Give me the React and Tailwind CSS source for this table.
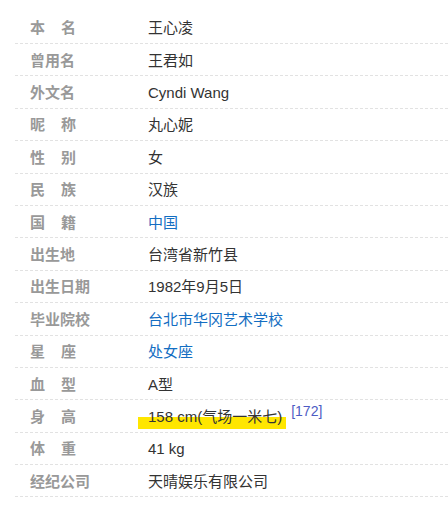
import React from 'react'

const rows = [
  { name: ['本', '名'], value: '王心凌' },
  { name: '曾用名', value: '王君如' },
  { name: '外文名', value: 'Cyndi Wang' },
  { name: ['昵', '称'], value: '丸心妮' },
  { name: ['性', '别'], value: '女' },
  { name: ['民', '族'], value: '汉族' },
  { name: ['国', '籍'], value: '中国', link: true },
  { name: '出生地', value: '台湾省新竹县' },
  { name: '出生日期', value: '1982年9月5日' },
  { name: '毕业院校', value: '台北市华冈艺术学校', link: true },
  { name: ['星', '座'], value: '处女座', link: true },
  { name: ['血', '型'], value: 'A型' },
  { name: ['身', '高'], value: '158 cm(气场一米七)', mark: true, ref: '[172]' },
  { name: ['体', '重'], value: '41 kg' },
  { name: '经纪公司', value: '天晴娱乐有限公司' },
]

function Label({ name }) {
  if (Array.isArray(name)) {
    return (
      <span className="flex w-[46px] justify-between">
        <span>{name[0]}</span>
        <span>{name[1]}</span>
      </span>
    )
  }
  return <span>{name}</span>
}

export default function App() {
  return (
    <div
      className="bg-white w-[448px] h-[507px] overflow-hidden pt-[11.6px] pl-[15px]"
      style={{ fontFamily: '"Liberation Sans", "Noto Sans CJK SC", sans-serif' }}
    >
      {rows.map((r, i) => (
        <div
          key={i}
          className="relative flex items-center h-[32.4px] border-b border-dashed border-[#e2e2e2] text-[15px] leading-none"
        >
          {r.mark && (
            <span className="absolute left-[123px] top-[17px] w-[148px] h-[12px] bg-[#ffe600]" />
          )}
          <div className="w-[133px] pl-[15px] pt-[1px] font-bold text-[#999]">
            <Label name={r.name} />
          </div>
          <div className="relative flex items-center pt-[1px]">
            <span className={r.link ? 'text-[#136ec2]' : 'text-[#333]'}>{r.value}</span>
            {r.ref && (
              <span className="ml-[9px] -mt-[11px] text-[14px] text-[#4d5cc4]">{r.ref}</span>
            )}
          </div>
        </div>
      ))}
    </div>
  )
}
